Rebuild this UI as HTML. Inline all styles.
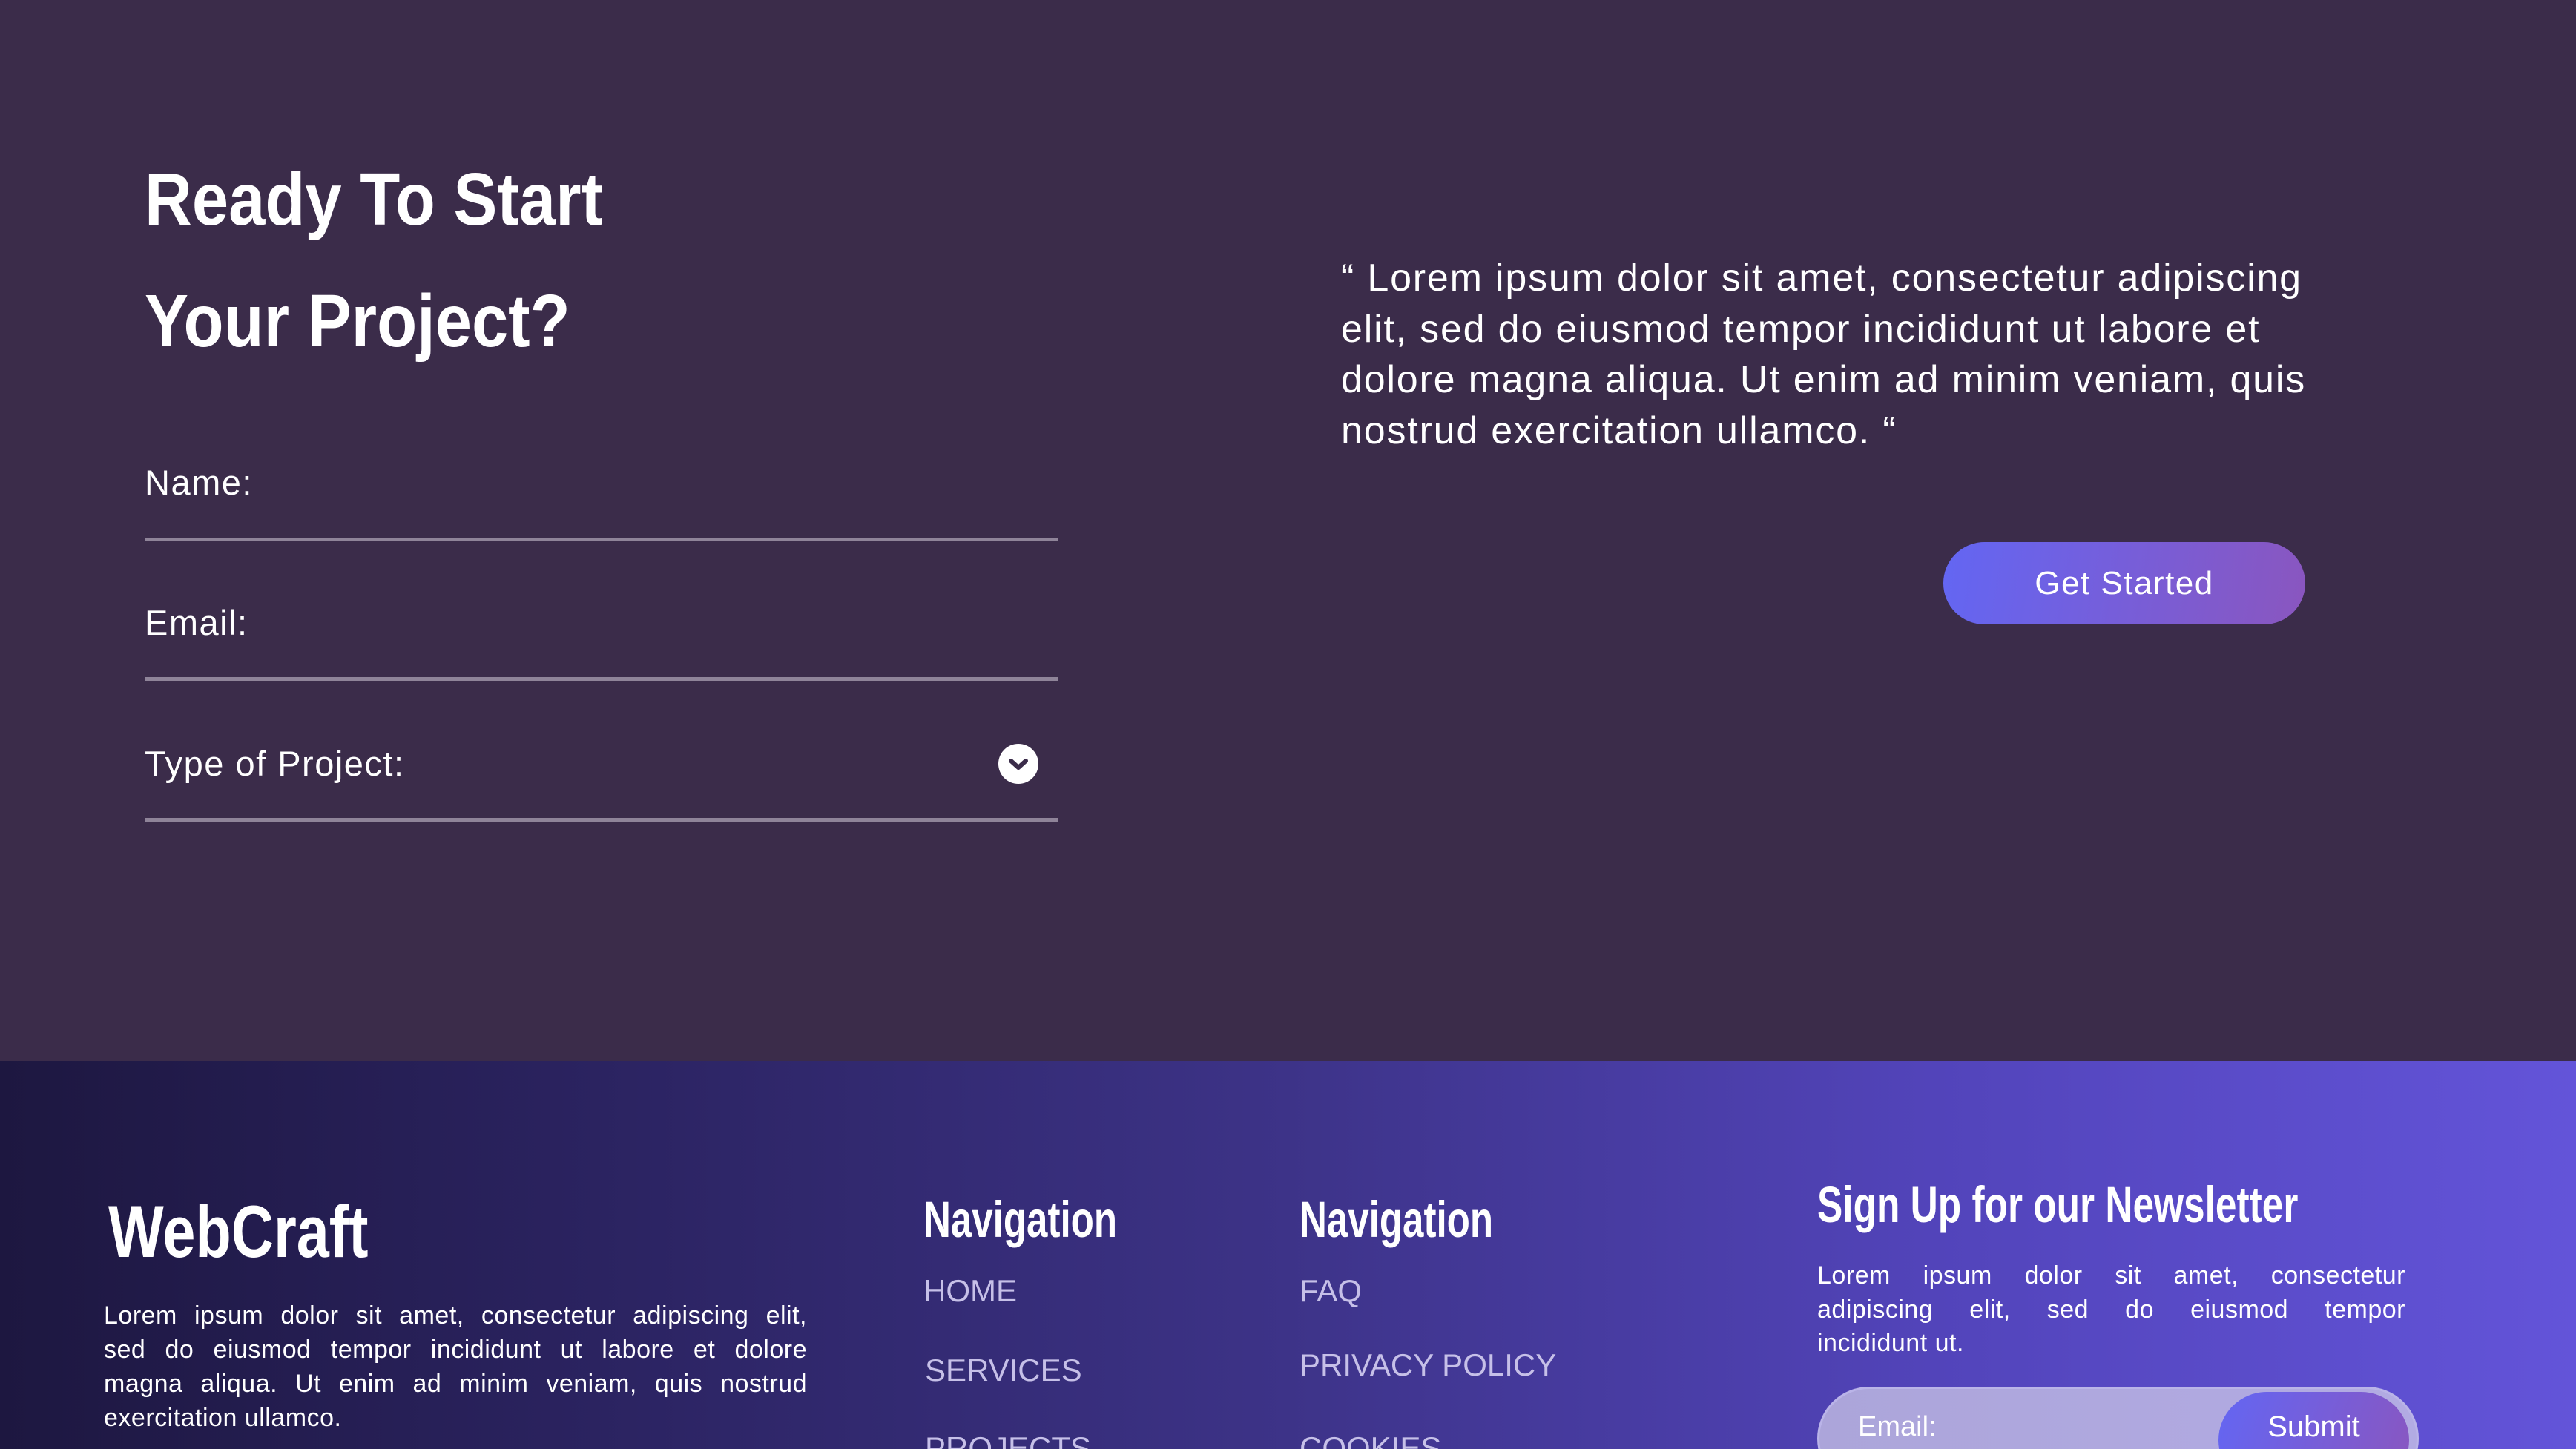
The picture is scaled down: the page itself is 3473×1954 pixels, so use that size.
<!DOCTYPE html>
<html style="width:3473px;height:1954px;overflow:hidden"><head><meta charset="utf-8"><style>
*{margin:0;padding:0;box-sizing:border-box}
body{width:3473px;height:1954px;overflow:hidden;background:#3b2c4a;font-family:"Liberation Sans",sans-serif;color:#fff}
#w{position:relative;width:3473px;height:1954px;overflow:hidden}
.a{position:absolute;white-space:nowrap}
.h{font-weight:bold;transform-origin:0 0;line-height:1}
.line{position:absolute;left:195px;width:1232px;height:5px;background:#8f8499}
.lab{font-size:47px;line-height:1;letter-spacing:1.5px}
.q{font-size:52px;line-height:68.7px;letter-spacing:1.8px}
.lk{font-size:42px;line-height:1;color:#c6c0e8;letter-spacing:0}
.p div{text-align:justify;text-align-last:justify;white-space:nowrap}
.p div.l{text-align-last:left}
</style></head><body><div id="w">
<div class="a h" style="left:195px;top:219px;font-size:100px;transform:scaleX(0.885)">Ready To Start</div>
<div class="a h" style="left:195px;top:383px;font-size:100px;transform:scaleX(0.885)">Your Project?</div>
<div class="a lab" style="left:195px;top:627px">Name:</div>
<div class="line" style="top:725px"></div>
<div class="a lab" style="left:195px;top:816px">Email:</div>
<div class="line" style="top:913px"></div>
<div class="a lab" style="left:195px;top:1006px">Type of Project:</div>
<div class="line" style="top:1103px"></div>
<svg class="a" style="left:1345px;top:1002px" width="56" height="56" viewBox="0 0 56 56"><circle cx="28" cy="28" r="27" fill="#fff"/><path d="M18 24 L28 33 L38 24" stroke="#3b2c4a" stroke-width="6" fill="none" stroke-linecap="round" stroke-linejoin="round"/></svg>

<div class="a q" style="left:1808px;top:341px">“ Lorem ipsum dolor sit amet, consectetur adipiscing<br>elit, sed do eiusmod tempor incididunt ut labore et<br>dolore magna aliqua. Ut enim ad minim veniam, quis<br>nostrud exercitation ullamco. “</div>
<div class="a" style="left:2620px;top:731px;width:488px;height:111px;border-radius:56px;background:linear-gradient(100deg,#6366f3,#8a56bf);font-size:44px;letter-spacing:1.5px;text-align:center;line-height:111px">Get Started</div>

<div class="a" style="left:0;top:1431px;width:3473px;height:523px;background:linear-gradient(90deg,#1d1740 0%,#2c2463 25%,#3d3388 50%,#5244ba 75%,#6354d9 100%)"></div>
<div class="a h" style="left:146px;top:1611px;font-size:99px;transform:scaleX(0.8)">WebCraft</div>
<div class="a p" style="left:140px;top:1751px;width:948px;font-size:34px;line-height:46px;letter-spacing:0.5px">
<div>Lorem ipsum dolor sit amet, consectetur adipiscing elit,</div>
<div>sed do eiusmod tempor incididunt ut labore et dolore</div>
<div>magna aliqua. Ut enim ad minim veniam, quis nostrud</div>
<div class="l">exercitation ullamco.</div></div>
<div class="a h" style="left:1245px;top:1610px;font-size:69px;transform:scaleX(0.74)">Navigation</div>
<div class="a h" style="left:1752px;top:1610px;font-size:69px;transform:scaleX(0.74)">Navigation</div>
<div class="a lk" style="left:1245px;top:1720px">HOME</div>
<div class="a lk" style="left:1247px;top:1827px">SERVICES</div>
<div class="a lk" style="left:1247px;top:1932px">PROJECTS</div>
<div class="a lk" style="left:1752px;top:1720px">FAQ</div>
<div class="a lk" style="left:1752px;top:1820px">PRIVACY POLICY</div>
<div class="a lk" style="left:1752px;top:1932px">COOKIES</div>
<div class="a h" style="left:2450px;top:1590px;font-size:69px;transform:scaleX(0.745)">Sign Up for our Newsletter</div>
<div class="a p" style="left:2450px;top:1698px;width:793px;font-size:34px;line-height:45.5px;letter-spacing:0.5px">
<div>Lorem ipsum dolor sit amet, consectetur</div>
<div>adipiscing elit, sed do eiusmod tempor</div>
<div class="l">incididunt ut.</div></div>
<div class="a" style="left:2450px;top:1870px;width:811px;height:140px;border-radius:70px;background:linear-gradient(90deg,#aca5da,#b2abe3);border:3px solid #bab4e8"></div>
<div class="a" style="left:2505px;top:1905px;font-size:38px;line-height:1">Email:</div>
<div class="a" style="left:2991px;top:1877px;width:257px;height:130px;border-radius:65px;background:linear-gradient(110deg,#6366f3,#8a56bf);font-size:40px;text-align:center;line-height:94px">Submit</div>
</div></body></html>
